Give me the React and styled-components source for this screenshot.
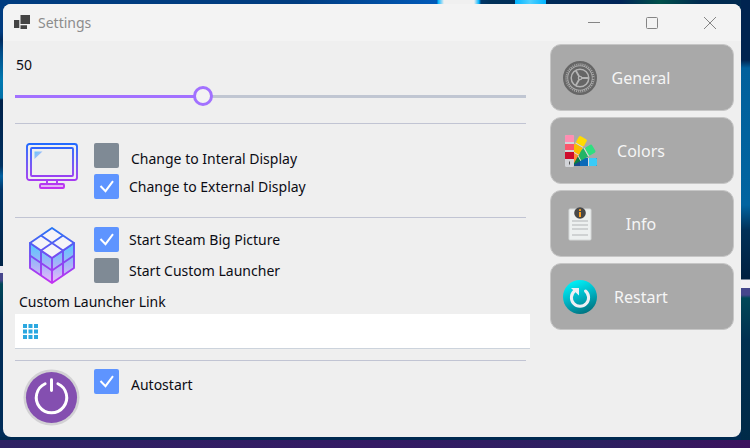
import React, { useState } from "react";
import styled, { createGlobalStyle, css } from "styled-components";

const GlobalStyle = createGlobalStyle`
  *, *::before, *::after { box-sizing: border-box; }
  body { margin: 0; font-family: "Noto Sans", "Open Sans", sans-serif; font-size: 14px; line-height: 20px; color: #0c0c14; }
  button, input { font: inherit; }
`;

const Desktop = styled.div`
  display: flex;
  min-height: 100vh;
  padding: 4px 9px 11px 3px;
  background:
    linear-gradient(90deg, transparent 437px, #00b4ff 438px, #f0f0f0 444px, #f0f0f0 474px, #00b4ff 479px, transparent 481px) 0 0 / 100% 4px no-repeat,
    linear-gradient(90deg, transparent 515px, #00b4ff 515px, #4fd0ff 530px, #00b4ff 546px, transparent 546px) 0 0 / 100% 4px no-repeat,
    linear-gradient(90deg, #003c80 300px, #0059b8 436px, #003058 490px, #002458 620px, #00504a 660px, #002a50 700px) 0 0 / 100% 4px no-repeat,
    linear-gradient(90deg, #2e2263, #341a64 50%, #2c2060 80%, #3c125e) 0 100% / 100% 8px no-repeat,
    linear-gradient(#002a50, #002a50) 0 100% / 100% 11px no-repeat,
    linear-gradient(#003c80 0 32px, #002c60 40px, #004c88 52px, #0078b0 80px, #0070a8 98px, #002048 100px, #003060 166px, #0060a0 176px, #003468 190px, #002448 266px, #e8e8f0 266px 273px, #46468c 273px 280px, #004858 284px, #002c58 320px) 0 0 / 8px 100% no-repeat;
  background-color: #002a50;

  &::after {
    content: "";
    width: 9px;
    margin: -4px -9px -3px 0;
    background: linear-gradient(#002450 0, #002450 60px, #00609c 68px, #0064a0 205px, #003058 230px, #002040 279px, #f4f0f4 280px 288px, #46468c 288px 295px, #004858 298px, #003050 340px, #002a48);
  }
`;

const Window = styled.main`
  flex: 1;
  min-width: 0;
  background: #efefef;
  border-radius: 8px;
  overflow: hidden;
`;

const TitleBar = styled.header`
  display: flex;
  align-items: center;
  height: 37px;
  padding: 0 2px 0 11px;
  background: #f3f3f3;
  color: #8c8c8c;
`;

const Title = styled.h1`
  flex: 1;
  margin: 0 0 0 8px;
  font-size: 14px;
  font-weight: 400;
`;

const Caption = styled.button`
  display: grid;
  place-items: center;
  width: 58px;
  height: 37px;
  padding: 0;
  border: 0;
  background: none;
  color: #858585;
`;

const Body = styled.div`
  display: flex;
  gap: 20px;
  padding: 3px 7px 8px 12px;
`;

const Panel = styled.section`
  flex: 1;
  min-width: 0;
`;

const Sidebar = styled.nav`
  display: flex;
  flex-direction: column;
  flex: 0 0 184px;
  gap: 6px;
`;

const NavButton = styled.button`
  display: flex;
  align-items: center;
  height: 67px;
  padding: 0 12px;
  border: 1px solid #c6c6c6;
  border-radius: 11px;
  background: #a9a9a9;
  color: #f5f5f5;
  font-size: 16px;
  line-height: 24px;
`;

const NavText = styled.span`
  flex: 1;
  padding-right: 36px;
  text-align: center;
`;

const Volume = styled.div`
  display: flex;
  flex-direction: column;
  gap: 11px;
  padding: 11px 4px 17px 0;
`;

const Value = styled.output`
  padding-left: 1px;
`;

const Slider = styled.input`
  width: 100%;
  height: 20px;
  margin: 0;
  appearance: none;
  background: linear-gradient(90deg, #a271ff ${(p) => p.$fill}%, #c0c6d2 ${(p) => p.$fill}%) 0 50% / 100% 3px no-repeat;

  &::-webkit-slider-thumb {
    appearance: none;
    width: 20px;
    height: 20px;
    border: 3px solid #a271ff;
    border-radius: 50%;
    background: #f3f3f3;
  }
`;

const Divider = styled.hr`
  height: 1px;
  margin: 0 4px 0 0;
  border: 0;
  background: #c1c4d3;
`;

const Group = styled.div`
  display: grid;
  grid-template-columns: 73px 1fr;
  column-gap: 6px;
  align-items: start;
  padding: ${(p) => p.$pad};
`;

const Art = styled.div`
  display: grid;
  justify-items: center;
`;

const Options = styled.div`
  display: flex;
  flex-direction: column;
  gap: 6px;
`;

const Option = styled.label`
  display: flex;
  align-items: center;
  gap: 10px;
  height: 25px;
  ${(p) => p.$loose && css`
    gap: 12px;
    & > span { padding-top: 6px; }
  `}
`;

const Check = styled.input`
  appearance: none;
  flex: none;
  width: 25px;
  height: 25px;
  margin: 0;
  border-radius: 2px;
  background: #7f8a95;

  &:checked { background: #5e94ff; }
`;

const CheckCell = styled.span`
  display: grid;
  && { padding: 0; }
  & > * { grid-area: 1 / 1; }
  & > svg { pointer-events: none; }
  & > input:not(:checked) + svg { visibility: hidden; }
`;

const FieldLabel = styled.label`
  display: block;
  padding: 0 4px 2px;
`;

const Field = styled.div`
  display: flex;
  align-items: center;
  gap: 8px;
  height: 35px;
  margin-bottom: 11px;
  padding: 0 8px;
  border-bottom: 1px solid #ccd3dc;
  background: #fff;
`;

const LinkInput = styled.input`
  flex: 1;
  min-width: 0;
  border: 0;
  outline: 0;
  background: none;
`;

function CheckOption({ label, initial = false, loose }) {
  const [on, setOn] = useState(initial);
  return (
    <Option $loose={loose}>
      <CheckCell>
        <Check type="checkbox" checked={on} onChange={(e) => setOn(e.target.checked)} />
        <svg width="25" height="25" viewBox="0 0 25 25" fill="none" stroke="#fff" strokeWidth="2">
          <path d="M6.5 12l5 5.2L19 7.2" />
        </svg>
      </CheckCell>
      <span>{label}</span>
    </Option>
  );
}

const AppIcon = () => (
  <svg width="16" height="16" viewBox="0 0 16 16" fill="#444">
    <path d="M6.5 0H16v9H6.500zM0 5h5.300v8H0zM6.500 10.300H13V14H6.500z" />
  </svg>
);

const MonitorIcon = () => (
  <svg width="52" height="46" viewBox="0 0 52 46" fill="none" stroke="url(#mon)" strokeWidth="1.900">
    <defs>
      <linearGradient id="mon" gradientUnits="userSpaceOnUse" x1="0" y1="0" x2="0" y2="46">
        <stop stopColor="#1f6bff" /><stop offset=".5" stopColor="#7450f5" /><stop offset="1" stopColor="#c530f0" />
      </linearGradient>
      <linearGradient id="glare" x2="1" y2="1"><stop stopColor="#68c4fa" /><stop offset="1" stopColor="#c9b8fa" /></linearGradient>
    </defs>
    <rect x="1" y="1" width="50" height="36" rx="2.500" />
    <rect x="5" y="5" width="42" height="28" rx="1" />
    <path d="M21 37v4M31 37v4" />
    <rect x="14" y="41" width="24" height="4" rx="1" fill="#e4b4f5" />
    <path d="M8.500 8.500h8l-8 7.500z" fill="url(#glare)" stroke="none" />
  </svg>
);

const CubeIcon = () => (
  <svg width="46" height="57" viewBox="0 0 46 57" fill="none" stroke="url(#cubeLine)" strokeWidth="1.900" strokeLinejoin="round">
    <defs>
      <linearGradient id="cubeLine" gradientUnits="userSpaceOnUse" x1="0" y1="0" x2="0" y2="57">
        <stop stopColor="#2477f5" /><stop offset=".5" stopColor="#754cf2" /><stop offset="1" stopColor="#c630f2" />
      </linearGradient>
      <linearGradient id="cubeFill" gradientUnits="userSpaceOnUse" x1="0" y1="16" x2="0" y2="57">
        <stop stopColor="#52c8ff" /><stop offset=".5" stopColor="#a3b5f8" /><stop offset="1" stopColor="#eeb8fb" />
      </linearGradient>
    </defs>
    <path d="M1 16l22 15 22-15v25L23 56 1 41z" fill="url(#cubeFill)" />
    <path d="M23 1l22 15-22 15L1 16z" fill="#f5f4f8" />
    <path d="M12 8.500l22 15v25M34 8.500l-22 15v25M23 31v25M1 28.500l22 15 22-15" />
  </svg>
);

const GridIcon = () => (
  <svg width="15" height="15" viewBox="0 0 15 15" fill="#2ba8e0">
    <path d="M0 0h4v4H0zM5.500 0h4v4h-4zM11 0h4v4h-4zM0 5.500h4v4H0zM5.500 5.500h4v4h-4zM11 5.500h4v4h-4zM0 11h4v4H0zM5.500 11h4v4h-4zM11 11h4v4h-4z" />
  </svg>
);

const PowerIcon = () => (
  <svg width="57" height="57" viewBox="0 0 58 58" fill="none">
    <circle cx="29" cy="29" r="28.500" fill="#d2d1d4" />
    <circle cx="29" cy="29" r="26" fill="#844fb0" />
    <path d="M22.500 15a15.500 15.500 0 1 0 13 0M29 11v11" stroke="#fff" strokeWidth="3" strokeLinecap="round" />
  </svg>
);

const GearIcon = () => (
  <svg width="34" height="34" viewBox="0 0 34 34" fill="none">
    <circle cx="17" cy="17" r="15.800" stroke="#666" strokeWidth="2.400" />
    <circle cx="17" cy="17" r="13.600" stroke="#666" strokeWidth="2" strokeDasharray="1.100 1" />
    <circle cx="17" cy="17" r="10.600" fill="#666" stroke="#666" strokeWidth="2.400" />
    <circle cx="17" cy="17" r="8.800" stroke="#b4b4b4" strokeWidth="1.500" />
    <path d="M17 17h9M17 17l-4.500-8M17 17l-4.500 8" stroke="#b4b4b4" strokeWidth="1.800" />
    <circle cx="17" cy="17" r="2.300" fill="#b4b4b4" />
    <circle cx="17" cy="17" r="1" fill="#666" />
  </svg>
);

const SwatchIcon = () => (
  <svg width="34" height="34" viewBox="0 0 34 34">
    <g transform="translate(2 1)">
      <path d="M8 23h24v8H8z" fill="#164a8c" />
      <path d="M15 23h8v8h-8z" fill="#0b69b8" />
      <path d="M24 23h7q1 0 1 1v6q0 1-1 1h-7z" fill="#3acbf8" />
      <path d="M23 23h1v8h-1z" fill="#ddd" />
      <g transform="rotate(60 4.500 27)"><path d="M0 14h9v13H0z" fill="#087d43" /><path d="M0 8h9v8H0z" fill="#23b466" /><rect y="-1" width="9" height="8" rx="1.500" fill="#2fdf80" /><path d="M0 7h9v1H0zM0 16h9v1H0z" fill="#ddd" /></g>
      <g transform="rotate(30 4.500 27)"><path d="M0 14h9v13H0z" fill="#ff8f35" /><path d="M0 8h9v8H0z" fill="#f9bd00" /><rect y="-1" width="9" height="8" rx="1.500" fill="#ffdb00" /><path d="M0 7h9v1H0zM0 16h9v1H0z" fill="#ddd" /></g>
      <rect width="9" height="32" rx="1.500" fill="#d2d4d8" />
      <path d="M0 7V1.500Q0 0 1.500 0h6Q9 0 9 1.500V7z" fill="#ff8eb2" />
      <path d="M0 9h9v6H0z" fill="#fb556b" />
      <path d="M0 17h9v7H0z" fill="#ce0c2c" />
      <path d="M4 26.500h1v3H4z" fill="#555" />
    </g>
  </svg>
);

const InfoIcon = () => (
  <svg width="34" height="34" viewBox="0 0 34 34" fill="none">
    <rect x="6" y="2" width="22" height="31" rx="1" fill="#edf0f0" stroke="#d5d8d8" />
    <path d="M9 14h16M9 18h16M9 22h16M9 28h16" stroke="#c5c8c9" strokeWidth="1.300" />
    <circle cx="17" cy="6" r="5.800" fill="#484848" />
    <path d="M16 5h2v5h-2zM16 2.300h2v1.800h-2z" fill="#ffa21f" />
  </svg>
);

const RestartIcon = () => (
  <svg width="34" height="34" viewBox="0 0 34 34" fill="none">
    <defs>
      <linearGradient id="orb" x1=".3" y1="0" x2=".7" y2="1"><stop stopColor="#00f4fa" /><stop offset=".5" stopColor="#00b3c3" /><stop offset="1" stopColor="#006f7c" /></linearGradient>
    </defs>
    <circle cx="17" cy="17" r="17" fill="url(#orb)" />
    <path d="M22.500 11a8.600 8.600 0 1 1-11 0" stroke="#eeeff4" strokeWidth="3" strokeLinecap="round" />
    <path d="M8 8h8v7.500z" fill="#eeeff4" />
  </svg>
);

const NAV = [
  ["General", GearIcon],
  ["Colors", SwatchIcon],
  ["Info", InfoIcon],
  ["Restart", RestartIcon],
];

export default function App() {
  const [level, setLevel] = useState(50);
  const [link, setLink] = useState("");
  const max = 138;
  return (
    <Desktop>
      <GlobalStyle />
      <Window>
        <TitleBar>
          <AppIcon />
          <Title>Settings</Title>
          <Caption aria-label="Minimize">
            <svg width="12" height="12" stroke="currentColor"><path d="M0 5.500h12" /></svg>
          </Caption>
          <Caption aria-label="Maximize">
            <svg width="12" height="12" fill="none" stroke="currentColor"><rect x=".5" y=".5" width="11" height="11" rx="1" /></svg>
          </Caption>
          <Caption aria-label="Close">
            <svg width="12" height="12" stroke="currentColor"><path d="M0 0l12 12M12 0L0 12" /></svg>
          </Caption>
        </TitleBar>
        <Body>
          <Panel>
            <Volume>
              <Value htmlFor="level">{level}</Value>
              <Slider
                id="level"
                type="range"
                aria-label="Level"
                min="0"
                max={max}
                value={level}
                $fill={(level / max) * 100}
                onChange={(e) => setLevel(Number(e.target.value))}
              />
            </Volume>
            <Divider />
            <Group $pad="19px 0 18px">
              <Art><MonitorIcon /></Art>
              <Options>
                <CheckOption label="Change to Interal Display" loose />
                <CheckOption label="Change to External Display" initial />
              </Options>
            </Group>
            <Divider />
            <Group $pad="9px 0 8px">
              <Art><CubeIcon /></Art>
              <Options>
                <CheckOption label="Start Steam Big Picture" initial />
                <CheckOption label="Start Custom Launcher" />
              </Options>
            </Group>
            <FieldLabel htmlFor="launcher">Custom Launcher Link</FieldLabel>
            <Field>
              <GridIcon />
              <LinkInput id="launcher" type="text" value={link} onChange={(e) => setLink(e.target.value)} />
            </Field>
            <Divider />
            <Group $pad="8px 0 0">
              <Art><PowerIcon /></Art>
              <Options>
                <CheckOption label="Autostart" initial loose />
              </Options>
            </Group>
          </Panel>
          <Sidebar>
            {NAV.map(([label, Icon]) => (
              <NavButton key={label}>
                <Icon />
                <NavText>{label}</NavText>
              </NavButton>
            ))}
          </Sidebar>
        </Body>
      </Window>
    </Desktop>
  );
}
